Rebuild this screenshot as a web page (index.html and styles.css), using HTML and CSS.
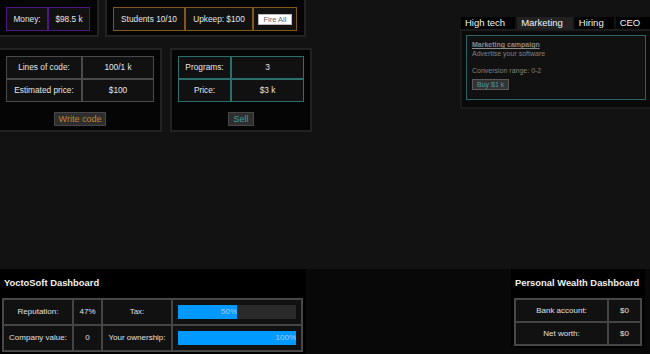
FILE: index.html
```html
<!DOCTYPE html>
<html>
<head>
<meta charset="utf-8">
<link rel="stylesheet" href="styles.css">
</head>
<body>
<div class="main">
  <div class="left-col">
    <div class="row row-top">
      <div class="panel panel-top panel-money">
        <table class="grid grid-purple">
          <tr><td class="c-money-l">Money:</td><td class="c-money-r">$98.5 k</td></tr>
        </table>
      </div>
      <div class="panel panel-top">
        <table class="grid grid-orange">
          <tr>
            <td class="c-students">Students 10/10</td>
            <td class="c-upkeep">Upkeep: $100</td>
            <td class="c-fire"><button class="btn-fire">Fire All</button></td>
          </tr>
        </table>
      </div>
    </div>
    <div class="row row-mid">
      <div class="panel panel-mid">
        <table class="grid grid-gray">
          <tr><td class="c-code-l">Lines of code:</td><td class="c-code-r">100/1 k</td></tr>
          <tr><td class="c-code-l">Estimated price:</td><td class="c-code-r">$100</td></tr>
        </table>
        <div class="actions"><button class="btn btn-orange">Write code</button></div>
      </div>
      <div class="panel panel-mid">
        <table class="grid grid-teal">
          <tr><td class="c-sell-l">Programs:</td><td class="c-sell-r">3</td></tr>
          <tr><td class="c-sell-l">Price:</td><td class="c-sell-r">$3 k</td></tr>
        </table>
        <div class="actions"><button class="btn btn-teal">Sell</button></div>
      </div>
    </div>
  </div>
  <div class="tabs-panel">
    <div class="tabs">
      <div class="tab">High tech</div>
      <div class="tab tab-active">Marketing</div>
      <div class="tab">Hiring</div>
      <div class="tab">CEO</div>
    </div>
    <div class="tab-body">
      <div class="card">
        <div class="card-title">Marketing campaign</div>
        <div class="card-text">Advertise your software</div>
        <div class="card-text card-gap">Conversion range: 0-2</div>
        <button class="btn-buy">Buy $1 k</button>
      </div>
    </div>
  </div>
</div>
<div class="bottom">
  <div class="dash dash-company">
    <div class="dash-title">YoctoSoft Dashboard</div>
    <table class="dash-table">
      <tr>
        <td class="d-c1">Reputation:</td>
        <td class="d-c2">47%</td>
        <td class="d-c3">Tax:</td>
        <td class="d-c4"><div class="bar"><div class="fill" style="width:50%">50%</div></div></td>
      </tr>
      <tr>
        <td class="d-c1">Company value:</td>
        <td class="d-c2">0</td>
        <td class="d-c3">Your ownership:</td>
        <td class="d-c4"><div class="bar"><div class="fill" style="width:100%">100%</div></div></td>
      </tr>
    </table>
  </div>
  <div class="dash dash-personal">
    <div class="dash-title">Personal Wealth Dashboard</div>
    <table class="dash-table dash-table-small">
      <tr><td class="p-c1">Bank account:</td><td class="p-c2">$0</td></tr>
      <tr><td class="p-c1">Net worth:</td><td class="p-c2">$0</td></tr>
    </table>
  </div>
</div>
</body>
</html>
```
FILE: styles.css
```css
* { box-sizing: border-box; }
html, body { margin: 0; padding: 0; }
body {
  width: 650px;
  height: 354px;
  overflow: hidden;
  background: #121212;
  color: #ddd;
  font-family: "Liberation Sans", Arial, sans-serif;
  display: flex;
  flex-direction: column;
}
.main {
  flex: 1;
  display: flex;
  align-items: flex-start;
  min-height: 0;
}
.left-col {
  margin-top: -2px;
  margin-left: -2px;
  display: flex;
  flex-direction: column;
}
.row { display: flex; align-items: flex-start; }
.row-top { gap: 6px; }
.row-mid { gap: 8px; margin-top: 11px; }

.panel {
  background: #050505;
  border: 2px solid #222;
}
.panel-top { padding: 7px 7px 4px 6px; }
.panel-mid { padding: 6px 6px 4px 6px; }

.grid {
  border-collapse: separate;
  border-spacing: 0;
}
.grid td {
  border: 1px solid #444;
  background: #111;
  text-align: center;
  vertical-align: middle;
  font-size: 8.3px;
  padding: 0;
  color: #e6e6e6;
  white-space: nowrap;
}
.grid-purple td { border-color: #4e1680; line-height: 22px; }
.grid-orange td { border-color: #84561c; line-height: 22px; }
.grid-gray td { border-color: #4a4a4a; line-height: 21px; }
.grid-teal td { border-color: #2a6e6e; line-height: 21px; }

.c-money-l, .c-money-r { width: 42px; }
.c-students { width: 72px; }
.c-upkeep { width: 68px; }
.c-fire { width: 44px; }
.c-code-l { width: 76px; }
.c-code-r { width: 72px; }
.c-sell-l { width: 53px; }
.c-sell-r { width: 73px; }

.btn-fire {
  font-family: "Liberation Sans", Arial, sans-serif;
  font-size: 7.5px;
  line-height: 9px;
  height: 11px;
  width: 34px;
  padding: 0;
  background: #fff;
  color: #666;
  border: 1px solid #bbb;
  vertical-align: middle;
  display: inline-block;
}

.actions {
  display: flex;
  justify-content: center;
  margin-top: 10px;
}
.btn {
  font-family: "Liberation Sans", Arial, sans-serif;
  font-size: 9px;
  height: 14px;
  line-height: 12px;
  padding: 0 4px;
  background: #2e2e2e;
  border: 1px solid #474747;
}
.btn-orange { color: #c0822e; }
.btn-teal { color: #3f9c9c; }

.tabs-panel {
  margin-left: auto;
  margin-right: -2px;
  margin-top: 17px;
  width: 192px;
}
.tabs {
  display: flex;
  gap: 2px;
  padding-left: 1px;
}
.tab {
  background: #000;
  color: #f2f2f2;
  font-size: 9.5px;
  height: 12px;
  line-height: 12px;
  padding: 0 10px 0 4px;
  white-space: nowrap;
}
.tab-active { background: #222; }
.tab-body {
  background: #0a0a0a;
  border: 2px solid #1c1c1c;
  padding: 4px 4px 7px 4px;
}
.card {
  border: 1px solid #2a6464;
  background: #111;
  padding: 5px;
  height: 65px;
  font-size: 7px;
  line-height: 8.5px;
  color: #808080;
}
.card-title {
  font-weight: bold;
  text-decoration: underline;
  color: #8a8a8a;
}
.card-gap { margin-top: 8.5px; }
.btn-buy {
  margin-top: 4px;
  font-family: "Liberation Sans", Arial, sans-serif;
  font-size: 7px;
  height: 11px;
  line-height: 9px;
  padding: 0 4px;
  background: #333;
  border: 1px solid #5a5a5a;
  color: #4a9c9c;
  display: block;
}

.bottom {
  height: 85px;
  background: #080808;
  display: flex;
  justify-content: space-between;
  align-items: flex-start;
  flex-shrink: 0;
}
.dash {
  background: #000;
}
.dash-company {
  width: 306px;
  height: 85px;
  padding: 8px 3px 0 2px;
}
.dash-personal {
  width: 134px;
  margin-right: 5px;
  padding: 8px 3px 2px 3px;
}
.dash-title {
  font-weight: bold;
  font-size: 9.4px;
  line-height: 11px;
  color: #f0f0f0;
  margin-left: 2px;
  margin-bottom: 10px;
  white-space: nowrap;
}
.dash-personal .dash-title { margin-left: 1px; }
.dash-table {
  border-collapse: separate;
  border-spacing: 0;
  border: 1px solid #4a4a4a;
}
.dash-table td {
  border: 1px solid #444;
  background: #111;
  font-size: 8px;
  line-height: 24px;
  text-align: center;
  vertical-align: middle;
  padding: 0;
  color: #e0e0e0;
  white-space: nowrap;
}
.dash-table-small td { line-height: 21px; }
.d-c1 { width: 70px; }
.d-c2 { width: 29px; }
.d-c3 { width: 70px; }
.dash-table td.d-c4 { width: 130px; padding: 0 5px; line-height: normal; }
.p-c1 { width: 93px; }
.p-c2 { width: 33px; }

.bar {
  height: 14px;
  background: #2a2a2a;
}
.fill {
  height: 14px;
  background: #0099ff;
  color: #a9cdf5;
  text-align: right;
  font-size: 8px;
  line-height: 14px;
}
```
